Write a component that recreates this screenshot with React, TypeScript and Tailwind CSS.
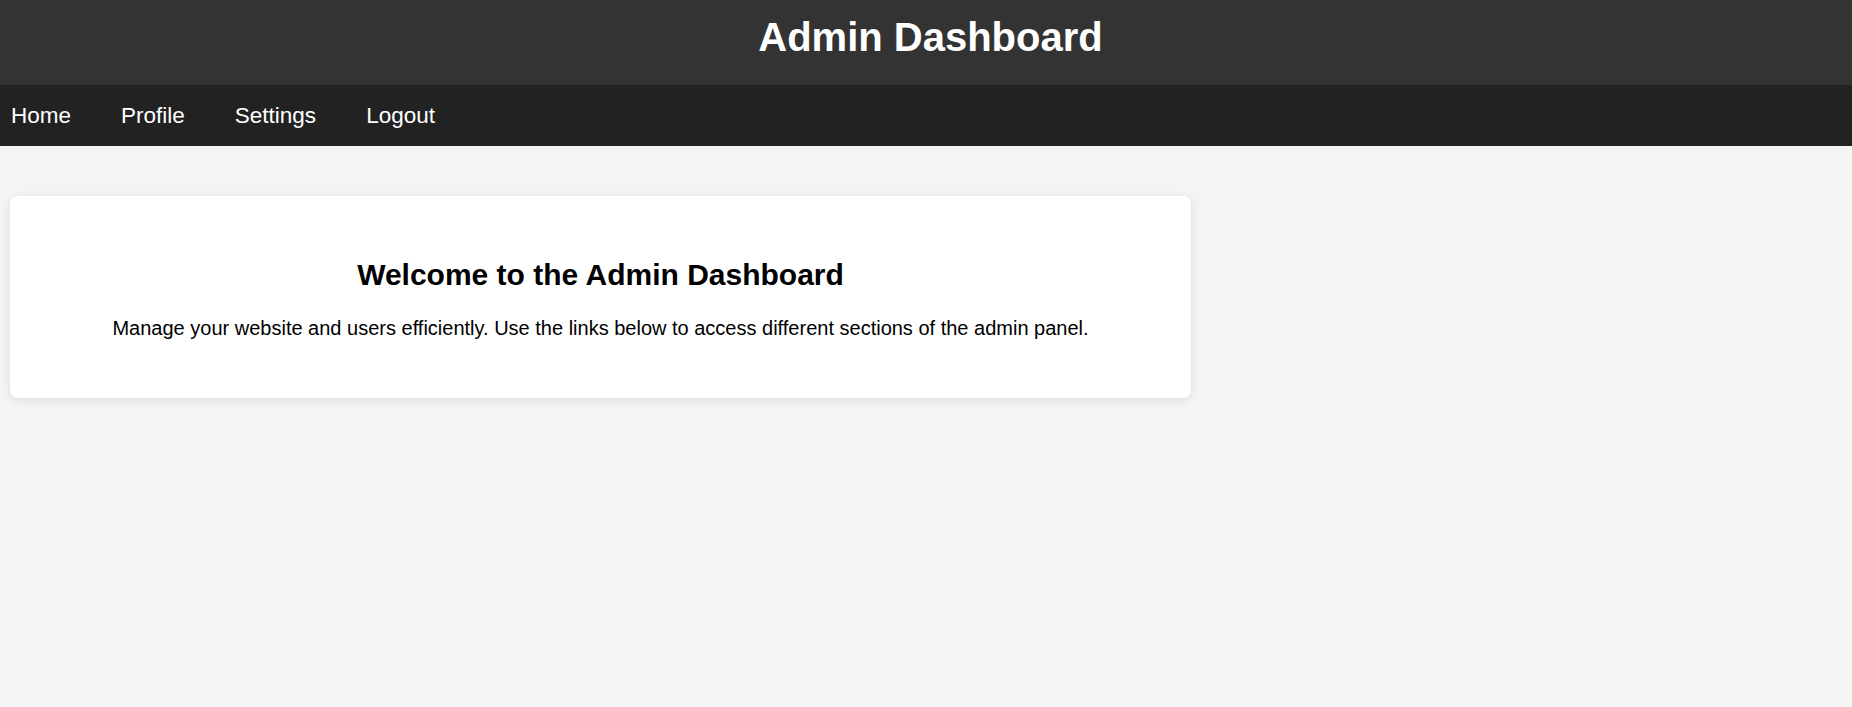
export default function App() {
  return (
    <div
      className="min-h-[707px] bg-[#f4f4f4]"
      style={{ fontFamily: '"Liberation Sans", Arial, sans-serif' }}
    >
      <header className="h-[85px] bg-[#333333] pt-[14px] pl-[9px] text-center text-white">
        <h1 className="m-0 text-[40px] font-bold leading-[46px]">Admin Dashboard</h1>
      </header>
      <nav className="flex h-[61px] gap-[50px] bg-[#222222] pl-[11px] pt-[18px]">
        {["Home", "Profile", "Settings", "Logout"].map((l) => (
          <a key={l} href="#" className="text-[22.5px] leading-[26px] text-white no-underline">
            {l}
          </a>
        ))}
      </nav>
      <main className="pt-[50px] pl-[10px]">
        <section className="w-[1181px] rounded-[8px] bg-white pt-[62px] pb-[58px] text-center text-black shadow-[0_2px_10px_rgba(0,0,0,0.1)]">
          <h2 className="m-0 text-[30px] font-bold leading-[34px]">Welcome to the Admin Dashboard</h2>
          <p className="mt-[25px] mb-0 text-[20px] leading-[23px]">
            Manage your website and users efficiently. Use the links below to access different sections of the admin panel.
          </p>
        </section>
      </main>
    </div>
  );
}
